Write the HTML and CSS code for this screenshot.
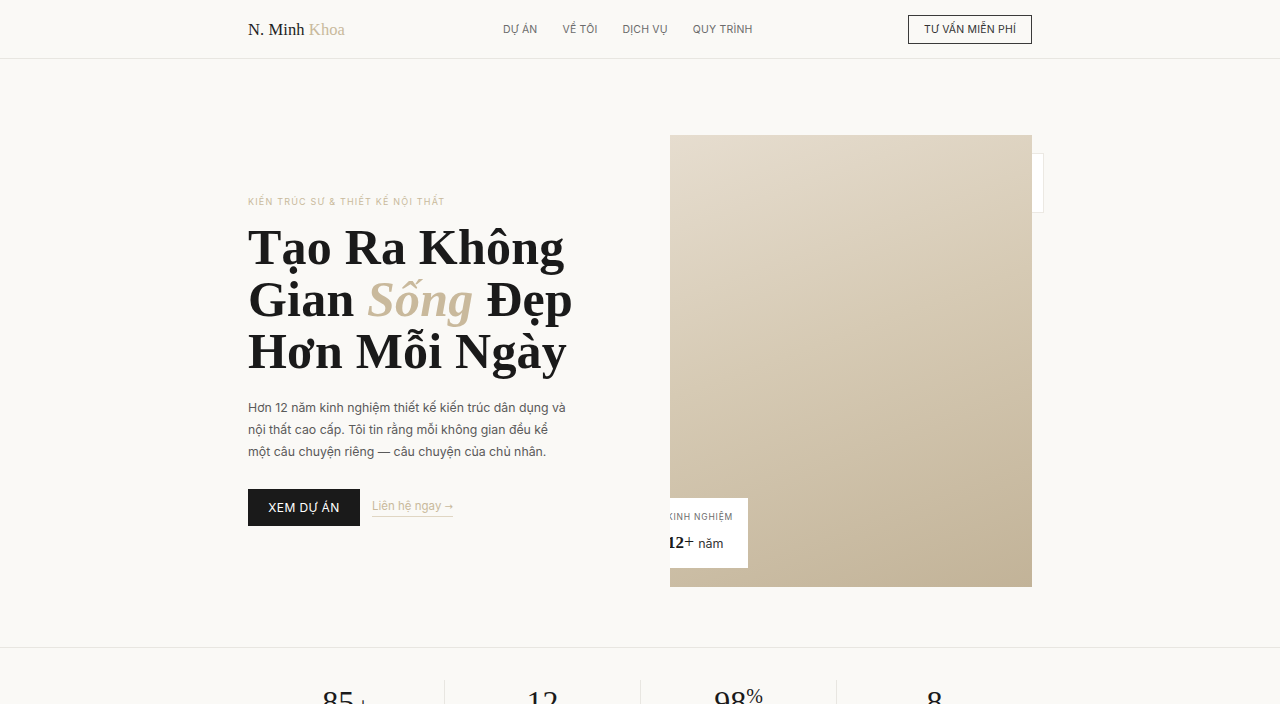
FILE: index.html
```html
<!DOCTYPE html>
<html lang="vi">
<head>
<meta charset="utf-8">
<title>N. Minh Khoa</title>
<link rel="stylesheet" href="styles.css">
</head>
<body>
<header class="site-header">
  <div class="container header-inner">
    <a class="logo" href="#">N. Minh <span class="gold">Khoa</span></a>
    <nav class="nav">
      <a href="#">DỰ ÁN</a>
      <a href="#">VỀ TÔI</a>
      <a href="#">DỊCH VỤ</a>
      <a href="#">QUY TRÌNH</a>
    </nav>
    <a class="btn-outline" href="#">TƯ VẤN MIỄN PHÍ</a>
  </div>
</header>

<section class="hero">
  <div class="container hero-grid">
    <div class="hero-text">
      <p class="eyebrow">KIẾN TRÚC SƯ &amp; THIẾT KẾ NỘI THẤT</p>
      <h1 class="hero-title">Tạo Ra Không<br>Gian <em>Sống</em> Đẹp<br>Hơn Mỗi Ngày</h1>
      <p class="hero-desc">Hơn 12 năm kinh nghiệm thiết kế kiến trúc dân dụng và nội thất cao cấp. Tôi tin rằng mỗi không gian đều kể một câu chuyện riêng — câu chuyện của chủ nhân.</p>
      <div class="hero-actions">
        <a class="btn-dark" href="#">XEM DỰ ÁN</a>
        <a class="link-gold" href="#">Liên hệ ngay <span class="arrow">→</span></a>
      </div>
    </div>
    <div class="hero-visual">
      <div class="frame-card"></div>
      <div class="hero-image">
        <div class="exp-badge">
          <div class="exp-label">KINH NGHIỆM</div>
          <div class="exp-value"><span class="exp-num">12</span><span class="exp-plus">+</span> năm</div>
        </div>
      </div>
    </div>
  </div>
</section>

<section class="stats">
  <div class="container stats-grid">
    <div class="stat"><span class="stat-num">85<span class="stat-plus">+</span></span></div>
    <div class="stat"><span class="stat-num">12</span></div>
    <div class="stat"><span class="stat-num">98<sup>%</sup></span></div>
    <div class="stat"><span class="stat-num">8</span></div>
  </div>
</section>
</body>
</html>
```

FILE: styles.css
```css
* { box-sizing: border-box; }
html, body { margin: 0; padding: 0; }
body {
  background: #faf9f6;
  color: #1a1a1a;
  font-family: Inter, "Noto Sans", sans-serif;
  overflow: hidden;
}
a { text-decoration: none; color: inherit; }
.container { width: 784px; margin: 0 auto; }

.site-header { border-bottom: 1px solid #e8e6e1; }
.header-inner {
  height: 58px;
  display: flex;
  align-items: center;
}
.logo {
  font-family: "Liberation Serif", "DejaVu Serif", serif;
  font-size: 16.5px;
  color: #222;
  width: 255px;
  letter-spacing: 0.1px;
  padding-top: 2px;
}
.gold { color: #c9b99c; }
.nav { display: flex; gap: 25px; }
.nav a {
  font-size: 10.5px;
  letter-spacing: 0.2px;
  color: #6b6b6b;
}
.btn-outline {
  margin-left: auto;
  border: 1px solid #3a3a3a;
  height: 29px;
  width: 124px;
  display: flex;
  align-items: center;
  justify-content: center;
  font-size: 10.5px;
  letter-spacing: 0.2px;
  color: #333;
}

.hero { padding: 76px 0 60px; border-bottom: 1px solid #e8e6e1; }
.hero-grid {
  display: grid;
  grid-template-columns: 362px 362px;
  gap: 60px;
  align-items: center;
}
.eyebrow {
  margin: 0 0 14px;
  font-size: 9px;
  letter-spacing: 1.2px;
  color: #c9b99c;
}
.hero-title {
  margin: 0;
  font-family: "Liberation Serif", "DejaVu Serif", serif;
  font-weight: 700;
  font-size: 50px;
  line-height: 52px;
  color: #1a1a1a;
  letter-spacing: 0.2px;
}
.hero-title em { color: #c9b99c; font-style: italic; }
.hero-desc {
  margin: 20px 0 26px;
  font-size: 12.3px;
  line-height: 22px;
  color: #5a5a5a;
  width: 321px;
}
.hero-actions { display: flex; align-items: center; gap: 12px; }
.btn-dark {
  background: #1a1a1a;
  color: #fff;
  height: 37px;
  width: 112px;
  display: flex;
  align-items: center;
  justify-content: center;
  font-size: 12px;
  letter-spacing: 0.4px;
}
.link-gold {
  font-size: 11.5px;
  color: #c9b99c;
  padding-bottom: 3px;
  border-bottom: 1px solid #e0d6c3;
}
.arrow { font-family: "DejaVu Sans", sans-serif; font-size: 10px; }

.hero-visual { position: relative; }
.frame-card {
  position: absolute;
  right: -12px;
  top: 18px;
  width: 120px;
  height: 60px;
  background: #fff;
  border: 1px solid #ece9e3;
}
.hero-image {
  position: relative;
  height: 452px;
  overflow: hidden;
  background: linear-gradient(160deg, #e6ddcf 0%, #d6cab4 45%, #c2b398 100%);
}
.exp-badge {
  position: absolute;
  left: -28px;
  bottom: 19px;
  background: #fff;
  padding: 14px 15px 15px 25px;
}
.exp-label {
  font-size: 8.5px;
  letter-spacing: 0.8px;
  color: #6b6b6b;
}
.exp-value {
  margin-top: 10px;
  font-size: 12.5px;
  color: #333;
  display: flex;
  align-items: baseline;
}
.exp-num {
  font-family: "Liberation Serif", serif;
  font-weight: 700;
  font-size: 17px;
  color: #1a1a1a;
}
.exp-plus {
  font-family: "Liberation Serif", serif;
  font-size: 18px;
  color: #1a1a1a;
  margin-right: 4px;
}

.stats { padding-top: 32px; }
.stats-grid {
  display: grid;
  grid-template-columns: repeat(4, 1fr);
}
.stat {
  text-align: center;
  border-left: 1px solid #e8e6e1;
  height: 80px;
  padding-top: 4px;
}
.stat:first-child { border-left: none; }
.stat-num {
  font-family: "Liberation Serif", serif;
  font-size: 32px;
  color: #1a1a1a;
}
.stat-plus { font-size: 24px; margin-left: 2px; }
.stat-num sup { font-size: 20px; vertical-align: 10px; }
```
